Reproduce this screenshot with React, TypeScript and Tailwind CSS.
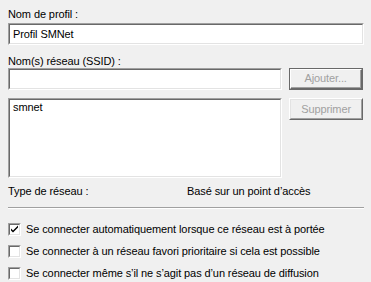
import React from "react";

const sunken =
  "border-t border-l border-t-[#a0a0a0] border-l-[#a0a0a0] border-b border-r border-b-white border-r-white";

function Sunken({ className, children }: { className: string; children?: React.ReactNode }) {
  return (
    <div className={`${sunken} ${className}`}>
      <div className="w-full h-full border-t border-l border-t-[#696969] border-l-[#696969] border-b border-r border-b-[#e3e3e3] border-r-[#e3e3e3] bg-white">
        {children}
      </div>
    </div>
  );
}

function Btn({ label, isDefault }: { label: string; isDefault?: boolean }) {
  if (isDefault) {
    return (
      <div className="w-[74px] h-[22px] border border-[#696969]">
        <div className="w-full h-full border-t border-l border-t-white border-l-white border-b border-r border-b-[#696969] border-r-[#696969]">
          <div className="w-full h-full border-b border-r border-b-[#a0a0a0] border-r-[#a0a0a0] flex items-center justify-center text-[#a0a0a0]">
            {label}
          </div>
        </div>
      </div>
    );
  }
  return (
    <div className="w-[74px] h-[22px] border-t border-l border-t-white border-l-white border-b border-r border-b-[#696969] border-r-[#696969]">
      <div className="w-full h-full border-t border-l border-t-[#e3e3e3] border-l-[#e3e3e3] border-b border-r border-b-[#a0a0a0] border-r-[#a0a0a0] flex items-center justify-center text-[#a0a0a0]">
        {label}
      </div>
    </div>
  );
}

function Check({ checked, label }: { checked?: boolean; label: string }) {
  return (
    <div className="flex items-center h-[13px]">
      <Sunken className="w-[13px] h-[13px] shrink-0">
        {checked && (
          <svg width="9" height="9" viewBox="0 0 9 9" className="block">
            <path d="M1 3.5 L1 5.5 L3 7.5 L8 2.5 L8 0.5 L3 5.5 Z" fill="#000" />
          </svg>
        )}
      </Sunken>
      <span className="ml-[5px] leading-[13px]">{label}</span>
    </div>
  );
}

export default function App() {
  return (
    <div
      className="w-[371px] h-[282px] bg-[#f0f0f0] px-2 text-[11px] tracking-[-0.1px] text-black overflow-hidden"
      style={{ fontFamily: '"Liberation Sans", Arial, sans-serif' }}
    >
      <div className="pt-[8px] leading-[13px]">Nom de profil :</div>
      <Sunken className="mt-[2px] h-[22px] w-[356px]">
        <div className="pl-[3px] leading-[18px]">Profil SMNet</div>
      </Sunken>
      <div className="mt-[10px] leading-[13px]">Nom(s) réseau (SSID) :</div>
      <div className="flex gap-[7px]">
        <Sunken className="h-[22px] w-[275px]" />
        <Btn label="Ajouter..." isDefault />
      </div>
      <div className="flex gap-[7px] mt-[8px]">
        <Sunken className="h-[80px] w-[275px]">
          <div className="pl-[3px] pt-[1px] leading-[13px]">smnet</div>
        </Sunken>
        <Btn label="Supprimer" />
      </div>
      <div className="flex mt-[7px] leading-[13px]">
        <div className="w-[179px]">Type de réseau :</div>
        <div>Basé sur un point d’accès</div>
      </div>
      <div className="mt-[9px] w-[356px] border-t border-t-[#a0a0a0] border-b border-b-white" />
      <div className="flex flex-col gap-[9px] mt-[14px]">
        <Check checked label="Se connecter automatiquement lorsque ce réseau est à portée" />
        <Check label="Se connecter à un réseau favori prioritaire si cela est possible" />
        <Check label="Se connecter même s’il ne s’agit pas d’un réseau de diffusion" />
      </div>
    </div>
  );
}
